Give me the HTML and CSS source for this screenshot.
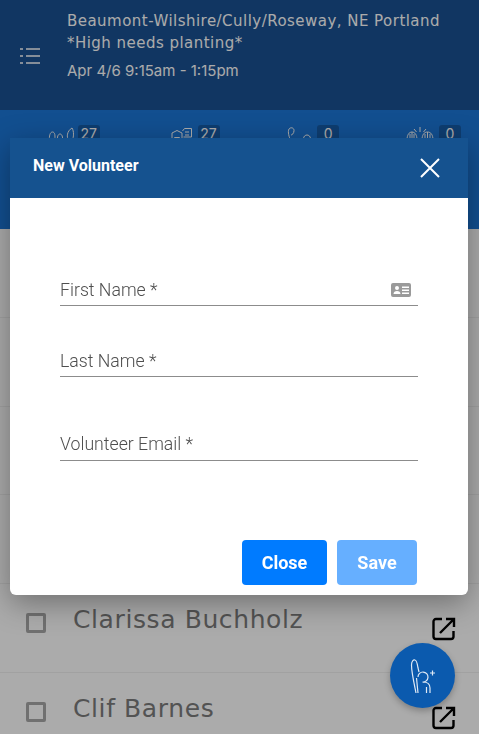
FILE: index.html
```html
<!DOCTYPE html>
<html lang="en">
<head>
    <meta charset="UTF-8">
    <meta name="viewport" content="width=device-width, initial-scale=1.0">
    <title>New Volunteer</title>
    <link rel="stylesheet" href="styles.css">
</head>
<body>
    <div class="page">
        <header class="top-bar">
            <svg class="menu-icon" width="20" height="18" viewBox="0 0 20 18" fill="none" stroke="#fff" stroke-width="1.6">
                <path d="M0 2h3M6 2h14M0 9h3M6 9h14M0 16h3M6 16h14"/>
            </svg>
            <div class="event-info">
                <div class="event-title">Beaumont-Wilshire/Cully/Roseway, NE Portland *High needs planting*</div>
                <div class="event-date">Apr 4/6 9:15am - 1:15pm</div>
            </div>
        </header>

        <div class="stats-bar">
            <div class="stat">
                <svg width="28" height="16" viewBox="0 0 28 16" fill="none" stroke="#fff" stroke-width="1">
                    <path d="M1.500 16c-.500-5 .500-9 3-9s3 4 2 9M9.500 16c-.500-4 .500-7 2.500-7s3 3 2.500 7M21 16c-3-4-2-10 3-13 2 3 2 9 0 13"/>
                </svg>
                <span class="badge">27</span>
            </div>
            <div class="stat">
                <svg width="26" height="16" viewBox="0 0 26 16" fill="none" stroke="#fff" stroke-width="1">
                    <path d="M2 16V8l5-2.500L12 8v8M4.500 16v-3.500h5V16M12.500 6l2-2.500h7V12h-8M15 7h4M15 10h4"/>
                </svg>
                <span class="badge">27</span>
            </div>
            <div class="stat">
                <svg width="28" height="16" viewBox="0 0 28 16" fill="none" stroke="#fff" stroke-width="1">
                    <path d="M4 16C2 12 .500 7 2 4c1.500-2 5-1.500 5 1.500S5 10 4 10M16.500 14c0-3 2-4 3.500-4s3.500 1 3.500 4"/>
                </svg>
                <span class="badge">0</span>
            </div>
            <div class="stat">
                <svg width="32" height="16" viewBox="0 0 32 16" fill="none" stroke="#fff" stroke-width="1">
                    <path d="M2 15c0-5 2-8 5-8s5 3 5 8M5 15V9M7 15V7M9 15V9M17 15c0-5 2-8 5.500-8s5.500 3 5.500 8M20 15V9M22.500 15V7M25 15V9M15 7V2M11.500 7L9 4M18.500 7L21 4"/>
                </svg>
                <span class="badge">0</span>
            </div>
        </div>

        <div class="volunteer-list">
            <div class="volunteer-row"></div>
            <div class="volunteer-row"></div>
            <div class="volunteer-row"></div>
            <div class="volunteer-row"></div>
            <div class="volunteer-row">
                <span class="checkbox"></span>
                <span class="volunteer-name">Clarissa Buchholz</span>
            </div>
            <div class="volunteer-row">
                <span class="checkbox"></span>
                <span class="volunteer-name">Clif Barnes</span>
            </div>
        </div>
    </div>

    <div class="backdrop"></div>

    <!-- these two stay black above the backdrop -->
    <svg class="link-icon link-one" width="24" height="24" viewBox="0 0 24 24" fill="none" stroke="#000" stroke-width="2.400">
        <path d="M10 2H4a2.500 2.500 0 0 0-2.500 2.500v15A2.500 2.500 0 0 0 4 22h15a2.500 2.500 0 0 0 2.500-2.500V14M14 2h8v8M22 2L8 16"/>
    </svg>
    <svg class="link-icon link-two" width="24" height="24" viewBox="0 0 24 24" fill="none" stroke="#000" stroke-width="2.400">
        <path d="M10 2H4a2.500 2.500 0 0 0-2.500 2.500v15A2.500 2.500 0 0 0 4 22h15a2.500 2.500 0 0 0 2.500-2.500V14M14 2h8v8M22 2L8 16"/>
    </svg>

    <button class="fab">
        <svg width="26" height="36" viewBox="0 0 26 36" fill="none" stroke="#dfe9f5" stroke-width="1.200">
            <path d="M6 35C4 25 1.500 14 1.500 7c0-4 2-5.500 3.500-5 2 .500 2.500 5 3 8l1 4M8 35L6.500 20M8 19a5 5 0 1 1 4.500 5M13 24c4 0 7 2 7 6v5M16.500 35v-6M20 15h5M22.500 12.500v5"/>
        </svg>
    </button>

    <div class="modal">
        <div class="modal-header">
            <h2 class="modal-title">New Volunteer</h2>
            <svg class="modal-close" width="20" height="20" viewBox="0 0 20 20" stroke="#fff" stroke-width="2">
                <path d="M1 1l18 18M19 1L1 19"/>
            </svg>
        </div>
        <div class="modal-body">
            <div class="field field-first">
                <label class="field-label">First Name *</label>
                <svg width="20" height="16" viewBox="0 0 20 16">
                    <path fill="#9a9a9a" fill-rule="evenodd" d="M2 1h16a2 2 0 0 1 2 2v10a2 2 0 0 1-2 2H2a2 2 0 0 1-2-2V3a2 2 0 0 1 2-2zM6 4a2 2 0 1 0 0 4 2 2 0 0 0 0-4zM2.500 12h7c0-2-1.500-3-3.500-3s-3.500 1-3.500 3zM11 4.500V6h7V4.500zM11 7.500V9h7V7.500zM11 10.500V12h7v-1.500z"/>
                </svg>
            </div>
            <div class="field field-last">
                <label class="field-label">Last Name *</label>
            </div>
            <div class="field field-email">
                <label class="field-label">Volunteer Email *</label>
            </div>
        </div>
        <div class="modal-footer">
            <button class="button button-close">Close</button>
            <button class="button button-save">Save</button>
        </div>
    </div>
</body>
</html>
```

FILE: styles.css
```css
html, body {
    height: 100%;
}
body {
    margin: 0;
    padding: 0;
    overflow: hidden;
    background-color: #fff;
    font-family: "DejaVu Sans", "Open Sans", sans-serif;
}
.page {
    height: 734px;
    overflow: hidden;
}
.top-bar {
    height: 110px;
    box-sizing: border-box;
    display: flex;
    align-items: flex-start;
    padding: 10px 30px 0 20px;
    background-color: #1a5193;
    color: #fff;
}
.menu-icon {
    flex: none;
    margin-top: 37px;
    margin-right: 27px;
}
.event-title {
    font-size: 15px;
    line-height: 22px;
    letter-spacing: 0.47px;
}
.event-date {
    font-family: "Inter", sans-serif;
    font-size: 15px;
    line-height: 22px;
    margin-top: 6px;
}
.stats-bar {
    height: 119px;
    display: grid;
    grid-template-columns: repeat(4, 1fr);
    background-color: #1b76d7;
}
.stat {
    display: flex;
    justify-content: flex-end;
    align-items: flex-start;
    gap: 2px;
    padding-top: 15px;
    padding-right: 20px;
}
.stat:last-child {
    padding-right: 18px;
}
.badge {
    width: 22px;
    height: 24px;
    border-radius: 3px;
    text-align: center;
    font-family: "Inter", sans-serif;
    font-size: 14px;
    line-height: 18px;
    color: #fff;
    background-color: #165ca8;
}
.volunteer-row {
    height: 88.8px;
    box-sizing: border-box;
    display: flex;
    align-items: flex-start;
    padding: 21px 0 0 26px;
    background-color: #fff;
    border-bottom: 1px solid #f0f0f0;
}
.checkbox {
    width: 20px;
    height: 20px;
    box-sizing: border-box;
    margin-top: 8px;
    border: 3px solid #a8a8a8;
    border-radius: 2px;
}
.volunteer-name {
    margin-left: 27px;
    font-size: 25px;
    line-height: 30px;
    letter-spacing: 0.6px;
    color: #7c7c7c;
}
.backdrop {
    position: fixed;
    top: 0;
    left: 0;
    right: 0;
    bottom: 0;
    background-color: rgba(0, 0, 0, 0.33);
}
.link-icon {
    position: absolute;
    left: 432px;
}
.link-one {
    top: 617px;
}
.link-two {
    top: 706px;
}
.fab {
    position: absolute;
    left: 390px;
    top: 643px;
    width: 65px;
    height: 65px;
    display: flex;
    align-items: center;
    justify-content: center;
    padding: 0;
    border: none;
    border-radius: 50%;
    background-color: #0b5aae;
    box-shadow: 0 3px 6px rgba(0, 0, 0, 0.25);
}
.modal {
    position: absolute;
    left: 10px;
    top: 138px;
    width: 458px;
    height: 457px;
    display: flex;
    flex-direction: column;
    background-color: #fff;
    border-radius: 0 0 6px 6px;
    box-shadow: 0 8px 30px rgba(0, 0, 0, 0.35);
    font-family: "Roboto", sans-serif;
}
.modal-header {
    height: 60px;
    box-sizing: border-box;
    flex: none;
    display: flex;
    align-items: center;
    justify-content: space-between;
    padding: 0 28px 5px 23px;
    background-color: #15528f;
}
.modal-close {
    margin-top: 5px;
}
.modal-title {
    margin: 0;
    font-size: 16px;
    font-weight: 700;
    color: #fff;
}
.modal-body {
    flex: 1;
    padding: 0 50px;
}
.field {
    display: flex;
    align-items: center;
    justify-content: space-between;
    height: 30px;
    border-bottom: 1px solid #8c8c8c;
}
.field svg {
    margin-right: 7px;
}
.field-first {
    margin-top: 77px;
}
.field-last {
    margin-top: 40px;
}
.field-email {
    margin-top: 53px;
}
.field-email .field-label {
    margin-bottom: 2px;
}
.field-label {
    font-size: 17.7px;
    font-weight: 300;
    color: #4f4f4f;
}
.modal-footer {
    display: flex;
    justify-content: flex-end;
    gap: 10px;
    padding: 0 51px 10px 0;
}
.button {
    height: 45px;
    border: none;
    border-radius: 4px;
    padding: 0;
    font-family: "Roboto", sans-serif;
    font-size: 18px;
    font-weight: 700;
    color: #fff;
}
.button-close {
    width: 85px;
    background-color: #007bff;
}
.button-save {
    width: 80px;
    background-color: #66afff;
}
```
